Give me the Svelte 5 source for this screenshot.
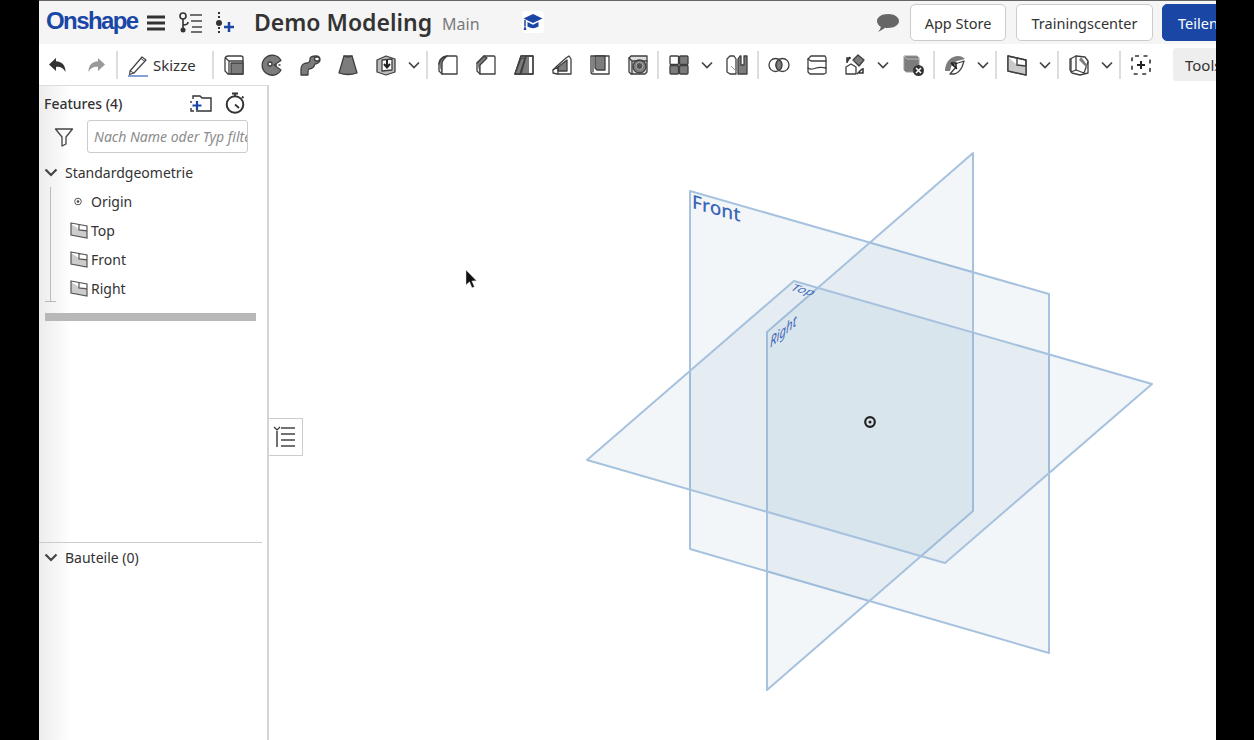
<script>
  const D = '#3f3f3f', G = '#7c7c7c', L = '#c9c9c9';
  const s = `stroke="${D}" stroke-width="1.3" stroke-linejoin="round" stroke-linecap="round"`;
  const icons = {
    undo: `<path d="M10 5 3 11.5 10 18v-4c4-.6 7 .8 9.5 5 .2-6.500-3.500-10.500-9.500-10.800z" fill="#333"/>`,
    redo: `<path d="M14 5l7 6.500L14 18v-4c-4-.6-7 .8-9.500 5-.2-6.500 3.500-10.500 9.500-10.800z" fill="#9a9a9a"/>`,
    extrude: `<path d="M3 6.500Q3 3 6.500 3H19q2 0 2 2v16H6l-3-3z" fill="#fff" ${s}/><path d="M3.500 5 7 8h14M7 8v13" fill="none" ${s}/><rect x="9" y="10" width="12" height="11" fill="${G}" ${s}/>`,
    revolve: `<path d="M21 7.500A10 10 0 1 0 21 17l-7-5z" fill="${G}" ${s}/><circle cx="10" cy="11" r="2" fill="#fff" ${s}/><path d="M15 12h7" stroke="${D}" stroke-width="1.3" stroke-dasharray="2 1.500"/>`,
    sweep: `<path d="M3 22v-6c0-4 3-6 6-6 3 0 3-2 3-4 0-2 3-3 6-3 3 0 4 2 4 4s-3 4-5 4c-1 3-3 5-6 5-1 0-1 2-1 6z" fill="${G}" ${s}/><ellipse cx="19" cy="6" rx="2.500" ry="2" fill="#fff" ${s}/>`,
    loft: `<path d="M8 3h8l5 17q-9 3-18 0z" fill="${G}" ${s}/><path d="M8 3q4 2 8 0" fill="none" ${s}/>`,
    thicken: `<path d="M3 7l9-4 9 3v13l-9 3-9-3z" fill="#bbb" ${s}/><path d="M8 7l10-1v11l-10 1z" fill="#fff" ${s}/><path d="M13 7v7M10 11l3 3.500 3-3.500" fill="none" stroke="#222" stroke-width="2"/>`,
    fillet: `<path d="M3 10Q4 4 11 3h9q1 0 1 1v17H6l-3-3z" fill="#fff" ${s}/><path d="M3 11q1-6 8-8l-3 3q-2 2-2 5v10" fill="${G}" ${s}/>`,
    chamfer: `<path d="M3 10l7-7h10q1 0 1 1v17H6l-3-3z" fill="#fff" ${s}/><path d="M3 10l7-7 3 2-7 7v9" fill="${G}" ${s}/>`,
    draft: `<path d="M9 3h12v18H3z" fill="#fff" ${s}/><path d="M13 4h4v17H7z" fill="${G}"/><path d="M3 21 9 3h12v18zM14 3 9 21" fill="none" ${s}/><path d="M3 21l6-16 4 0-5 16z" fill="${G}" ${s}/>`,
    rib: `<path d="M3 17l4-4L16 5l3-2 2 3v15H7l-4-1z" fill="#fff" ${s}/><path d="M8 14l9-7v11H8z" fill="${G}" ${s}/><path d="M3 17l5-3v7" fill="none" ${s}/>`,
    shell: `<path d="M3 3h18v18H5q-2 0-2-2z" fill="#fff" ${s}/><path d="M7 3h10v14H9l-2-2z" fill="${G}" ${s}/><path d="M5 4v15" fill="none" ${s}/>`,
    hole: `<path d="M3 5l2-2h16v16l-2 2H5l-2-2z" fill="#ddd" ${s}/><path d="M3 5l3 3h15M6 8v13" fill="none" ${s}/><circle cx="13.500" cy="13.500" r="6.500" fill="${G}" ${s}/><circle cx="13.500" cy="13" r="3.500" fill="#555" stroke="#aaa"/>`,
    pattern: `<rect x="3" y="3" width="8.500" height="8.500" rx="1" fill="#fff" ${s}/><rect x="12.500" y="3" width="8.500" height="8.500" rx="1" fill="${G}" ${s}/><rect x="3" y="12.500" width="8.500" height="8.500" rx="1" fill="${G}" ${s}/><rect x="12.500" y="12.500" width="8.500" height="8.500" rx="1" fill="${G}" ${s}/>`,
    mirror: `<path d="M2 6l3-3h4l2 3v15H5l-3-2z" fill="#fff" ${s}/><path d="M13 21V6l2-3h1v9h3V3h3v18z" fill="${G}" ${s}/><path d="M6 13l6 6" stroke="#999" fill="none"/>`,
    boolean: `<circle cx="8.500" cy="12" r="6.500" fill="#fff" ${s}/><circle cx="15.500" cy="12" r="6.500" fill="#fff" ${s}/><path d="M12 6.500a6.500 6.500 0 0 1 0 11 6.500 6.500 0 0 1 0-11z" fill="${G}" ${s}/>`,
    split: `<path d="M3 6l3-3h14l1 2v15l-2 1H5l-2-2z" fill="#fff" ${s}/><path d="M3 6l3 2h15M3 15c5 4 7-3 18 0" fill="none" ${s}/>`,
    transform: `<path d="M3 14l5-3 5 3v7H3z" fill="#fff" ${s}/><path d="M10 7l5-5 6 5-5 6z" fill="${G}" ${s}/><path d="M4 10V5h4M7 4l-3 5M20 15v5h-4M19 16l-5 5" fill="none" stroke="#333" stroke-width="1.500"/>`,
    del: `<path d="M3 3h13l2 2v14H5l-2-2z" fill="${G}" stroke="#999"/><path d="M3 3l3 3h12" fill="none" stroke="#bbb"/><circle cx="17.500" cy="17.500" r="5.500" fill="#333"/><path d="M15 15l5 5m0-5-5 5" stroke="#fff" stroke-width="1.500"/>`,
    surface: `<path d="M2 18C2 8 9 3 15 3c3 0 5 1 7 3l-8 2-5 3-2 7z" fill="${G}"/><path d="M7 21l6-7-4-2 12-4-2 6q-3 6-8 7z" fill="#fff" ${s}/><path d="M8 10h5v5M8 10l6 6" fill="none" stroke="#222" stroke-width="1.500"/>`,
    plane: `<path d="M3 3l18 4v15L3 18z" fill="#fff" ${s}/><path d="M11 11l10 2v9L3 18V4" fill="${L}"/><path d="M3 3l18 4v15L3 18zM12 5v7l9 1" fill="none" stroke="${D}" stroke-width="1.400"/>`,
    frame: `<path d="M3 6l6-3 9 1 3 4v12l-8 2-8-2-2-3z" fill="#fff" ${s}/><path d="M9 3v14l8 3 4-11" fill="none" ${s}/><path d="M14 4l7 9v3l-9-9z" fill="${G}"/><path d="M4 6v13M9 17l-5 2" fill="none" ${s}/>`,
    add: `<rect x="3" y="3" width="18" height="18" rx="3" fill="none" stroke="#333" stroke-width="1.600" stroke-dasharray="4 4.500"/><path d="M12 8v8M8 12h8" stroke="#222" stroke-width="2"/>`,
    plane16: ``
  };
  const toolbarLeft = ['extrude','revolve','sweep','loft','thicken'];
  const toolbar2 = ['fillet','chamfer','draft','rib','shell','hole'];
  const tree = ['Top','Front','Right'];
</script>

{#snippet icon(name)}
  <button class="tool" aria-label={name}>
    <svg width="24" height="24" viewBox="0 0 24 24">{@html icons[name]}</svg>
  </button>
{/snippet}

{#snippet chev()}
  <span class="chev">
    <svg width="12" height="8" viewBox="0 0 12 8"><path d="M1 1.500l5 5 5-5" fill="none" stroke="#444" stroke-width="1.700"/></svg>
  </span>
{/snippet}

{#snippet treeChev()}
  <svg class="tchev" width="14" height="9" viewBox="0 0 14 9"><path d="M1.500 1.500 7 7l5.500-5.500" fill="none" stroke="#444" stroke-width="2.200"/></svg>
{/snippet}

{#snippet planeIcon()}
  <svg class="ticon" width="18" height="17" viewBox="0 0 18 17">
    <path d="M1 1l16 3v12L1 13z" fill="#fff"/>
    <path d="M9 7l8 1v8L1 13V2z" fill="#ccc"/>
    <path d="M1 1l16 3v12L1 13zM9 2.500V8l8 .8" fill="none" stroke="#555" stroke-width="1.200"/>
  </svg>
{/snippet}

<div class="page">
  <div class="black"></div>
  <main class="main">
    <header class="header">
      <span class="logo">Onshape</span>
      <svg class="hamb" width="18" height="16" viewBox="0 0 18 16"><path d="M0 2h18M0 8h18M0 14h18" stroke="#333" stroke-width="3"/></svg>
      <svg class="ver" width="24" height="22" viewBox="0 0 24 22">
        <circle cx="5" cy="4" r="3" fill="none" stroke="#333" stroke-width="1.600"/>
        <circle cx="5" cy="18" r="2.500" fill="#333"/>
        <path d="M5 7v9M5 13c3 0 5-1 5-3" fill="none" stroke="#333" stroke-width="1.600"/>
        <path d="M12 3h12M13 9h11M14 15h10M13 20h11" stroke="#444" stroke-width="1.500"/>
      </svg>
      <svg class="feat" width="20" height="22" viewBox="0 0 20 22">
        <circle cx="4" cy="11" r="3" fill="#333"/>
        <path d="M4 0v7M4 15v7" stroke="#333" stroke-width="2" stroke-dasharray="2 2"/>
        <path d="M14 10v10M9 15h10" stroke="#1a47a5" stroke-width="2.500"/>
      </svg>
      <h1 class="title">Demo Modeling</h1>
      <span class="branch">Main</span>
      <span class="cap">
        <svg width="20" height="20" viewBox="0 0 20 20">
          <path d="M10 2 0.500 6.500 10 11l9.500-4.500z" fill="#1a47a5"/>
          <path d="M4.500 10v4.500q5.500 3.500 11 0V10L10 12.800z" fill="#1a47a5"/>
          <path d="M2 8v6" stroke="#1a47a5" stroke-width="1.500"/>
          <path d="M2 13l1.500 5h-3z" fill="#1a47a5"/>
        </svg>
      </span>
      <div class="right">
        <svg class="chat" width="24" height="20" viewBox="0 0 24 20"><path d="M12 1c6 0 11 2.800 11 7s-5 7-11 7c-1 0-2 0-3-.2C7 16.500 4.500 18 2 19c1.500-1.500 2.500-3.200 2.800-5.200C2.500 12.500 1 10.500 1 8c0-4.200 5-7 11-7z" fill="#666"/></svg>
        <button class="btn appstore">App Store</button>
        <button class="btn training">Trainingscenter</button>
        <button class="btn share">Teilen</button>
      </div>
    </header>

    <nav class="toolbar">
      {@render icon('undo')}
      {@render icon('redo')}
      <i class="sep"></i>
      <button class="sketch">
        <svg width="24" height="24" viewBox="0 0 24 24">
          <path d="M3 18 15 4l4 3L7 20l-4.500 1.500z" fill="#fff" stroke="#444" stroke-width="1.200" stroke-linejoin="round"/>
          <path d="M3 18l4 2M14 5.500l4 3" fill="none" stroke="#444"/>
          <path d="M1 23h20" stroke="#3f6fc4" stroke-width="1.300"/>
        </svg>
        <span>Skizze</span>
      </button>
      <i class="sep"></i>
      {#each toolbarLeft as t}{@render icon(t)}{/each}
      {@render chev()}
      <i class="sep"></i>
      {#each toolbar2 as t}{@render icon(t)}{/each}
      <i class="sep tight"></i>
      {@render icon('pattern')}
      {@render chev()}
      {@render icon('mirror')}
      <i class="sep"></i>
      {@render icon('boolean')}
      {@render icon('split')}
      {@render icon('transform')}
      {@render chev()}
      {@render icon('del')}
      <i class="sep"></i>
      {@render icon('surface')}
      {@render chev()}
      <i class="sep"></i>
      {@render icon('plane')}
      {@render chev()}
      <i class="sep"></i>
      {@render icon('frame')}
      {@render chev()}
      <i class="sep"></i>
      {@render icon('add')}
      <button class="tools">Tools</button>
    </nav>

    <div class="work">
      <aside class="panel">
        <div class="ptitle">
          <strong>Features (4)</strong>
          <svg class="folder" width="24" height="20" viewBox="0 0 24 20">
            <path d="M4 6V3h7l2 2h9v13H7" fill="none" stroke="#333" stroke-width="1.400"/>
            <path d="M2 8v2M2 15v3h3" fill="none" stroke="#333" stroke-width="1.400"/>
            <path d="M8 8v9M3.500 12.500h9" stroke="#1a47a5" stroke-width="2.200"/>
          </svg>
          <svg class="timer" width="22" height="22" viewBox="0 0 22 22">
            <circle cx="11" cy="12.500" r="8.300" fill="none" stroke="#333" stroke-width="2"/>
            <path d="M8 1.500h6M11 2v2M11 12.500l4 3.500M18 4.500l1.500 1.500" fill="none" stroke="#333" stroke-width="1.800"/>
          </svg>
        </div>
        <div class="filter">
          <svg width="20" height="20" viewBox="0 0 20 20"><path d="M1.500 2h17l-6.500 8v7l-4 2V10z" fill="none" stroke="#444" stroke-width="1.300" stroke-linejoin="round"/></svg>
          <div class="input">Nach Name oder Typ filtern</div>
        </div>
        <div class="group">{@render treeChev()}<span>Standardgeometrie</span></div>
        <div class="rows">
          <div class="row">
            <svg class="ticon" width="18" height="17" viewBox="0 0 18 17"><circle cx="8" cy="8.500" r="3.300" fill="none" stroke="#555"/><circle cx="8" cy="8.500" r="1.300" fill="#444"/></svg>
            <span>Origin</span>
          </div>
          {#each tree as t}
            <div class="row">{@render planeIcon()}<span>{t}</span></div>
          {/each}
        </div>
        <div class="hbar"></div>
        <div class="grow"></div>
        <div class="divider"></div>
        <div class="group parts">{@render treeChev()}<span>Bauteile (0)</span></div>
      </aside>

      <section class="canvas">
        <div class="tab">
          <svg width="24" height="24" viewBox="0 0 24 24"><path d="M1 2l3 3 3-3" fill="none" stroke="#333" stroke-width="1.200"/><path d="M4 6v16" stroke="#333" stroke-width="1.400"/><path d="M8 3h14M8 9h14M8 15h14M8 21h14" stroke="#444" stroke-width="1.300"/></svg>
        </div>
        <svg class="planes" viewBox="269 85 947 655" width="947" height="655">
          <g class="pl">
            <path d="M690 191 1049 294V653L690 549Z"/>
            <path d="M973 153V511L767 690V332Z"/>
            <path d="M794 281 1152 384 945 563 587 460Z"/>
          </g>
          <text class="lab" transform="matrix(1 .287 0 1 692 208)" font-size="19">Front</text>
          <text class="lab thin" transform="matrix(.95 .27 -.62 .54 789 289.500)" font-size="14">Top</text>
          <text class="lab thin" transform="matrix(.76 -.66 -.0 1 770 348)" font-size="15" font-style="italic">Right</text>
          <circle cx="870" cy="422" r="4.800" fill="none" stroke="#222" stroke-width="2.200"/>
          <circle cx="870" cy="422" r="1.500" fill="#222"/>
          <path d="M466 270v15l3.500-3.200 2.500 6 2.400-1-2.500-5.800 4.600-.2z" fill="#111" stroke="#ddd" stroke-width=".5"/>
        </svg>
      </section>
    </div>
  </main>
  <div class="black"></div>
</div>

<style>
  :global(body) { margin: 0; background: #000; }
  .page { display: flex; width: 1254px; height: 740px; overflow: hidden; font-family: "Noto Sans", sans-serif; color: #333; }
  .black { flex: none; background: #000; width: 39px; }
  .black:last-child { width: 38px; }
  .main { flex: none; width: 1177px; height: 740px; display: flex; flex-direction: column; overflow: hidden; background: #fff; }

  .header { flex: none; height: 43px; border-top: 1px solid #666; background: #f5f5f5; display: flex; align-items: center; padding-left: 7px; box-sizing: content-box; }
  .logo { width: 94px; flex: none; font: bold 24px "Liberation Sans", sans-serif; letter-spacing: -1.600px; color: #1a47a5; margin-top: -3px; }
  .hamb { flex: none; margin-left: 7px; }
  .ver { flex: none; margin-left: 13px; }
  .feat { flex: none; margin-left: 13px; }
  .title { flex: none; margin: 0 0 0 19px; font-size: 23px; font-weight: 600; color: #333; line-height: 1; }
  .branch { flex: none; margin-left: 10px; font-size: 16px; color: #7a7a7a; margin-top: 3px; }
  .cap { flex: none; margin-left: 42px; width: 22px; height: 22px; background: #fff; border-radius: 3px; display: flex; align-items: center; justify-content: center; margin-top: -2px; }
  .right { flex: none; margin-left: auto; width: 340px; display: flex; align-items: center; position: relative; }
  .chat { flex: none; margin-right: 10px; }
  .btn { flex: none; height: 37px; box-sizing: border-box; border: 1px solid #ccc; border-radius: 5px; background: #fff; font: 14.500px "Noto Sans", sans-serif; color: #333; padding: 0; }
  .appstore { width: 96px; margin-right: 10px; }
  .training { width: 137px; margin-right: 9px; }
  .share { width: 80px; background: #1a47a5; border-color: #1a47a5; color: #fff; text-align: left; padding-left: 15px; }

  .toolbar { flex: none; height: 41px; display: flex; align-items: center; background: #fff; overflow: hidden; }
  .tool { flex: none; width: 38px; height: 38px; border: 0; background: none; padding: 0; display: flex; align-items: center; justify-content: center; }
  .sep { flex: none; width: 2px; height: 28px; margin: 0 1px; background: #ddd; }
  .sep.tight { margin-left: 0; }
  .chev { flex: none; width: 20px; display: flex; justify-content: flex-start; padding-left: 3px; box-sizing: border-box; }
  .sketch { flex: none; width: 92px; height: 38px; border: 0; background: none; display: flex; align-items: center; gap: 2px; padding: 0 0 0 8px; box-sizing: border-box; font: 15px "Noto Sans", sans-serif; color: #333; }
  .tools { flex: none; margin-left: 13px; width: 80px; height: 33px; border: 0; border-radius: 3px; background: #eee; font: 15px "Noto Sans", sans-serif; color: #333; text-align: left; padding-left: 12px; }

  .work { flex: 1; display: flex; min-height: 0; }
  .panel { flex: none; width: 228px; border-right: 2px solid #d4d4d4; border-top: 1px solid #ddd; background: linear-gradient(90deg, #ececec, #fff 32px); display: flex; flex-direction: column; font-size: 14px; color: #333; }
  .ptitle { flex: none; height: 34px; display: flex; align-items: center; padding-left: 5px; }
  .ptitle strong { font-weight: 500; width: 145px; }
  .folder { margin-left: 0; flex: none; }
  .timer { margin-left: 11px; flex: none; }
  .filter { flex: none; display: flex; align-items: center; height: 33px; padding-left: 15px; }
  .input { margin-left: 13px; width: 161px; height: 33px; box-sizing: border-box; border: 1px solid #ccc; border-radius: 3px; background: #fff; padding: 0 6px; line-height: 31px; font-style: italic; font-size: 14px; color: #8c8c8c; overflow: hidden; white-space: nowrap; }
  .group { flex: none; height: 29px; margin-top: 5px; display: flex; align-items: center; padding-left: 5px; }
  .tchev { flex: none; margin-right: 7px; }
  .rows { flex: none; margin-left: 11px; position: relative; padding-left: 19px; border-left: 1px solid #bbb; width: 200px; padding-bottom: 0; height: 115px; margin-top: 0; }
  .rows::after { content: ""; position: absolute; left: -6px; bottom: 0; width: 11px; height: 1px; background: #bbb; }
  .row { height: 29px; display: flex; align-items: center; gap: 3px; margin-top: 0; }
  .ticon { flex: none; }
  .hbar { flex: none; margin: 11px 0 0 6px; width: 211px; height: 8px; background: #b8b8b8; }
  .grow { flex: 1; max-height: 221px; }
  .divider { flex: none; width: 223px; height: 1px; background: #ccc; }
  .parts { margin-top: 0; }

  .canvas { flex: 1; position: relative; min-width: 0; overflow: hidden; }
  .tab { position: absolute; left: -1px; top: 333px; width: 35px; height: 38px; box-sizing: border-box; border: 1px solid #ccc; border-left: 0; background: #fff; display: flex; align-items: center; justify-content: center; z-index: 2; }
  .planes { position: absolute; left: 0; top: 0; }
  .pl path { fill: rgb(70 125 170 / 0.07); stroke: #a6c2de; stroke-width: 2; stroke-linejoin: round; }
  .lab { fill: #3b66b8; font-family: "Noto Sans", sans-serif; font-weight: 500; }
  .thin { font-weight: 400; }
</style>
